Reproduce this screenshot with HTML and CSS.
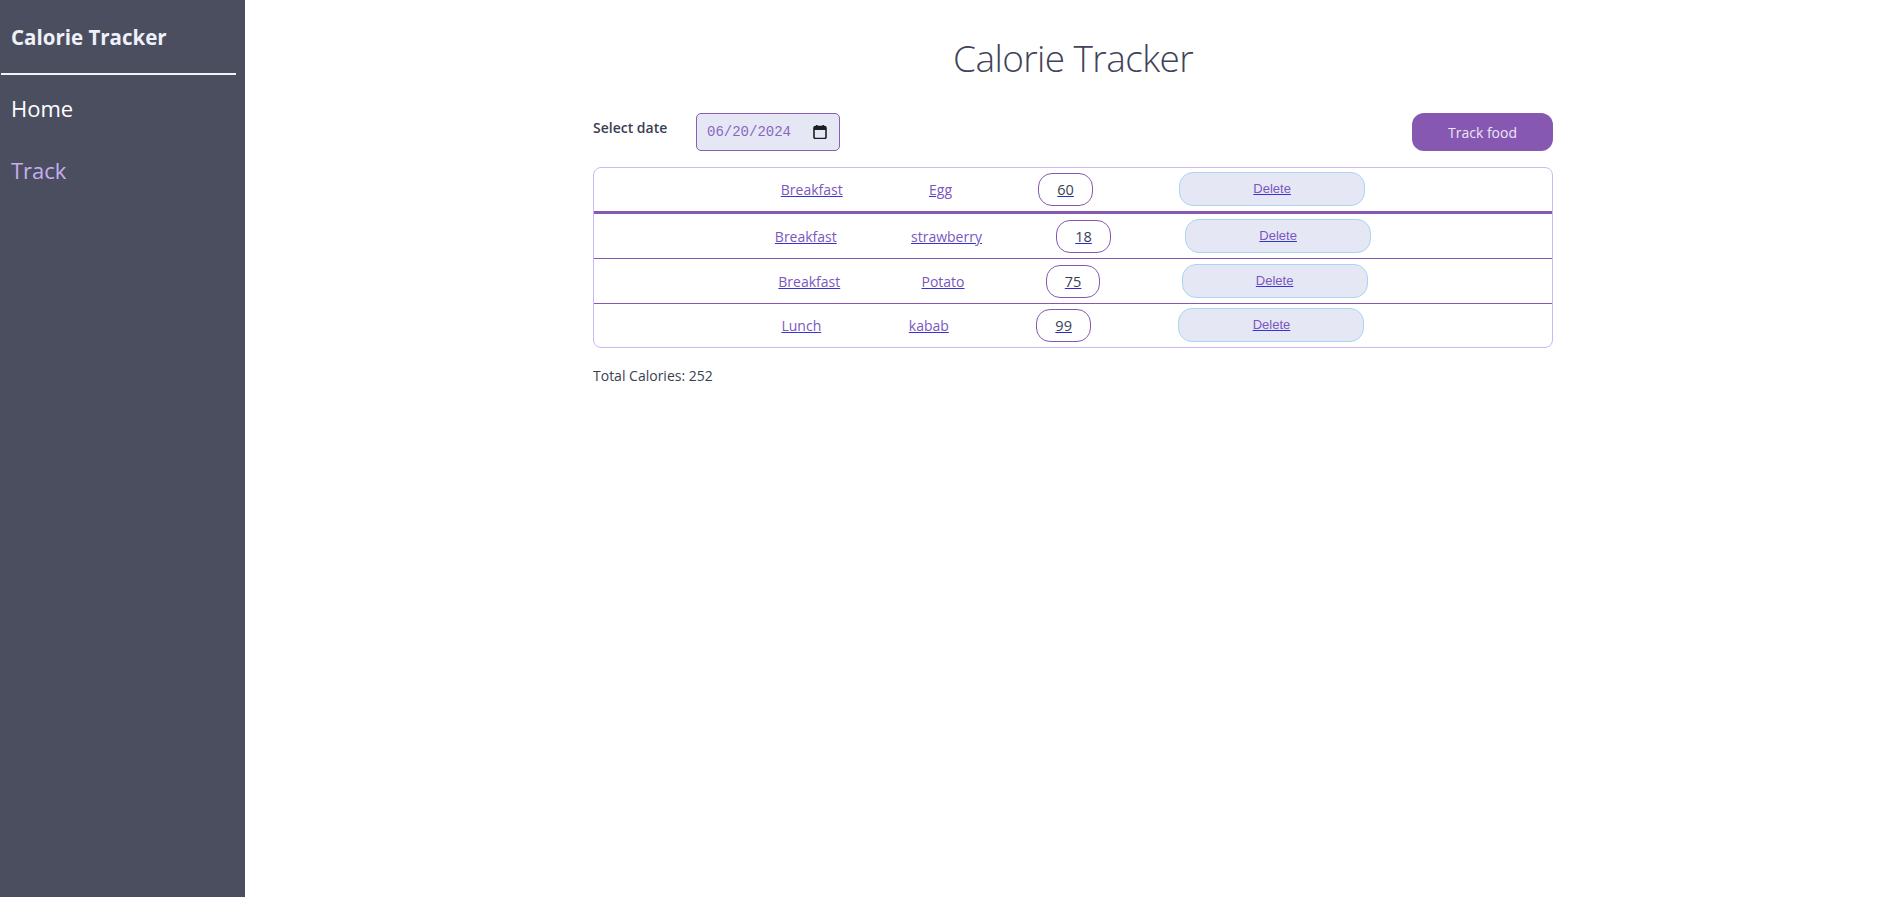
FILE: index.html
```html
<!DOCTYPE html>
<html lang="en">
<head>
<meta charset="utf-8">
<title>Calorie Tracker</title>
<link rel="stylesheet" href="styles.css">
</head>
<body>
<aside class="sidebar">
  <div class="brand">Calorie Tracker</div>
  <div class="divider"></div>
  <nav class="nav">
    <a class="nav-link" href="#">Home</a>
    <a class="nav-link active" href="#">Track</a>
  </nav>
</aside>
<main class="main">
  <div class="container">
    <h1 class="title">Calorie Tracker</h1>
    <div class="controls">
      <div class="date-group">
        <span class="date-label">Select date</span>
        <div class="date-input">
          <span class="date-value">06/20/2024</span>
          <svg class="cal-icon" width="14" height="14" viewBox="0 0 14 14" aria-hidden="true">
            <rect x="3" y="0" width="1.6" height="3" fill="#1f1f1f"/>
            <rect x="9.4" y="0" width="1.6" height="3" fill="#1f1f1f"/>
            <rect x="1" y="1.5" width="12" height="12" rx="1.5" fill="none" stroke="#1f1f1f" stroke-width="1.6"/>
            <rect x="1" y="1.5" width="12" height="3.5" fill="#1f1f1f"/>
          </svg>
        </div>
      </div>
      <button class="track-btn">Track food</button>
    </div>
    <div class="list">
      <div class="row row-first">
        <div class="row-inner">
          <a class="cell-link" href="#">Breakfast</a>
          <a class="cell-link" href="#">Egg</a>
          <span class="pill"><a href="#">60</a></span>
          <span class="del-btn"><a href="#">Delete</a></span>
        </div>
      </div>
      <div class="row">
        <div class="row-inner">
          <a class="cell-link" href="#">Breakfast</a>
          <a class="cell-link" href="#">strawberry</a>
          <span class="pill"><a href="#">18</a></span>
          <span class="del-btn"><a href="#">Delete</a></span>
        </div>
      </div>
      <div class="row">
        <div class="row-inner">
          <a class="cell-link" href="#">Breakfast</a>
          <a class="cell-link" href="#">Potato</a>
          <span class="pill"><a href="#">75</a></span>
          <span class="del-btn"><a href="#">Delete</a></span>
        </div>
      </div>
      <div class="row row-last">
        <div class="row-inner">
          <a class="cell-link" href="#">Lunch</a>
          <a class="cell-link" href="#">kabab</a>
          <span class="pill"><a href="#">99</a></span>
          <span class="del-btn"><a href="#">Delete</a></span>
        </div>
      </div>
    </div>
    <p class="total">Total Calories: 252</p>
  </div>
</main>
</body>
</html>
```
FILE: styles.css
```css
* { box-sizing: border-box; }
html, body { margin: 0; padding: 0; height: 100%; }
body {
  display: flex;
  font-family: "Open Sans", "Noto Sans", sans-serif;
  background: #ffffff;
  color: #3d4255;
}
.sidebar {
  width: 245px;
  flex: 0 0 245px;
  min-height: 100vh;
  background: #4b4e5f;
}
.brand {
  padding: 23px 0 22px 11px;
  font-size: 20.5px;
  line-height: 28px;
  font-weight: 700;
  color: #eef0fa;
}
.divider {
  height: 2px;
  width: 235px;
  margin-left: 1px;
  background: #f2f2f8;
}
.nav {
  display: flex;
  flex-direction: column;
  gap: 30px;
  padding: 17px 0 0 11px;
}
.nav-link {
  font-size: 22px;
  line-height: 32px;
  color: #ffffff;
  text-decoration: none;
}
.nav-link.active { color: #c6aef0; }

.main {
  flex: 1;
  display: flex;
  justify-content: center;
  padding-left: 8px;
}
.container {
  width: 960px;
}
.title {
  margin: 0;
  padding-top: 35px;
  height: 81px;
  font-size: 37px;
  line-height: 46px;
  font-weight: 300;
  letter-spacing: -0.6px;
  text-align: center;
  color: #3f4459;
}
.controls {
  margin-top: 32px;
  display: flex;
  justify-content: space-between;
  align-items: flex-start;
}
.date-group {
  display: flex;
  align-items: flex-start;
}
.date-label {
  margin-top: 5px;
  width: 103px;
  font-size: 14px;
  line-height: 20px;
  font-weight: 600;
  color: #3a3f52;
}
.date-input {
  width: 144px;
  height: 38px;
  display: flex;
  align-items: center;
  justify-content: space-between;
  padding: 0 12px 0 10px;
  background: #e5e8f4;
  border: 1px solid #8a5cb8;
  border-radius: 5px;
}
.date-value {
  font-family: "Liberation Mono", "DejaVu Sans Mono", monospace;
  font-size: 14px;
  color: #8a66c2;
}
.cal-icon { display: block; }
.track-btn {
  width: 141px;
  height: 38px;
  border: none;
  border-radius: 12px;
  background: #8758b1;
  color: #ece6f7;
  font-family: "Open Sans", "Noto Sans", sans-serif;
  font-size: 14px;
  padding: 0;
}
.list {
  margin-top: 16px;
  border: 1px solid #cdb8f4;
  border-radius: 8px;
}
.row {
  display: flex;
  justify-content: center;
  padding: 5px 0;
  border-bottom: 1px solid #8758b1;
}
.row-first {
  padding: 4px 0 5px;
  border-bottom: 3px solid #8758b1;
}
.row-last { border-bottom: none; padding: 4px 0 5px; }
.row-inner {
  width: 70%;
  display: flex;
  justify-content: space-around;
  align-items: center;
}
.cell-link {
  font-size: 14px;
  color: #7b56c0;
  text-decoration: underline;
  text-decoration-color: #3434d8;
}
.pill {
  height: 33px;
  display: inline-flex;
  align-items: center;
  padding: 0 18px;
  border: 1px solid #8758b1;
  border-radius: 14px;
  font-size: 14.5px;
}
.pill a {
  color: #3a3f52;
  text-decoration: underline;
  text-decoration-color: #2a2ad0;
}
.del-btn {
  width: 186px;
  height: 34px;
  display: inline-flex;
  align-items: center;
  justify-content: center;
  padding-bottom: 2px;
  background: #e5e8f4;
  border: 1px solid #a9d5ef;
  border-radius: 14px;
  font-family: "Liberation Sans", Arial, sans-serif;
  font-size: 13px;
}
.del-btn a {
  color: #7b56c0;
  text-decoration: underline;
  text-decoration-color: #3434d8;
}
.total {
  margin: 18px 0 0;
  font-size: 14px;
  line-height: 20px;
  color: #3a3f52;
}
```
